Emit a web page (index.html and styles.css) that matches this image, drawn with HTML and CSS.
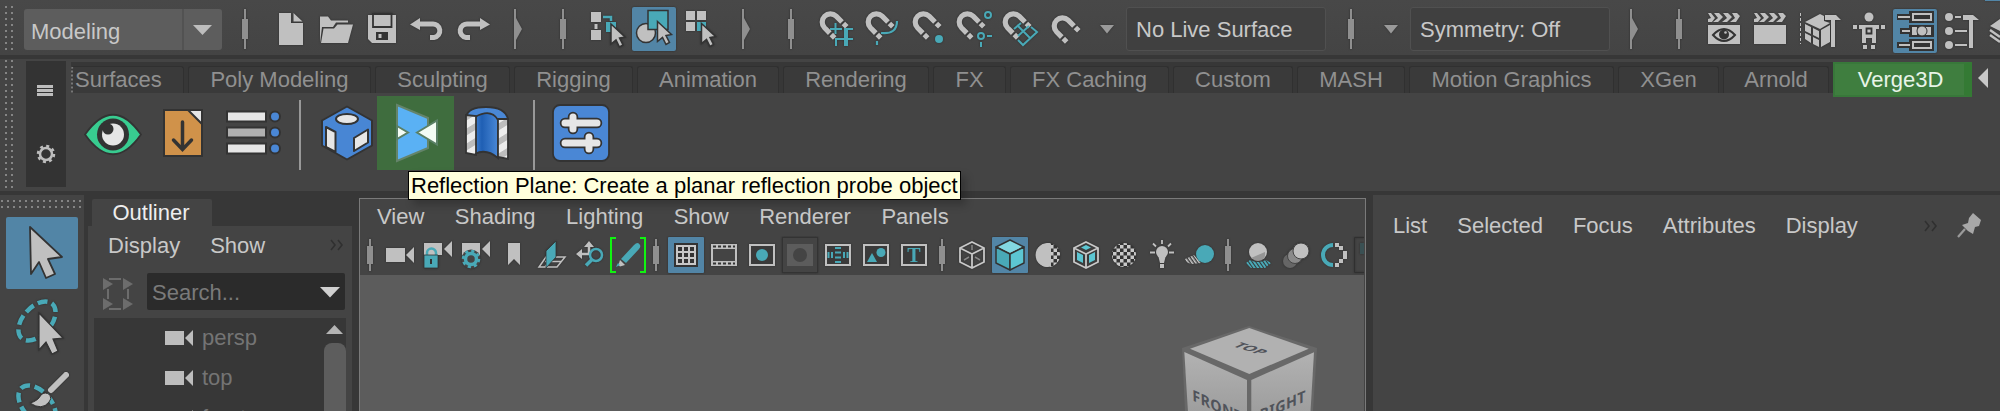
FILE: index.html
```html
<!DOCTYPE html>
<html lang="en">
<head>
<meta charset="utf-8">
<title>Modeling workspace</title>
<link rel="stylesheet" href="styles.css">
</head>
<body>
<svg width="0" height="0" class="defs">
  <defs>
    <g id="mag">
      <path d="M9.800 21.100 L4.500 15.800 A8.240 8.240 0 0 1 16.150 4.150 L22 10" fill="none" stroke="#c0c0c0" stroke-width="5.200"/>
      <path d="M11.300 22.600 l3.400 3.400 M23.400 11.400 l3.400 3.400" stroke="#c0c0c0" stroke-width="5"/>
    </g>
    <path id="pointer" d="M0 0 L14 13 L8.500 14 L12 21 L8.500 23 L5 16 L0 20 Z" fill="#c0c0c0" stroke="#333" stroke-width="1.500"/>
    <g id="cam"><rect x="0" y="0" width="19" height="14"/><path d="M28 -1 V15 L20 7 Z"/></g>
    <g id="sep" fill="#8f8f8f"><rect x="-1" y="-20" width="2" height="40"/><rect x="-3" y="-10" width="6" height="20"/></g>
    <g id="ssep" fill="#8f8f8f"><rect x="-1" y="-16" width="2" height="32"/><rect x="-3" y="-9" width="6" height="18"/></g>
    <g id="fold" fill="#8f8f8f"><rect x="0" y="-20" width="2" height="40"/><path d="M2 -11 L8 0 L2 11Z"/></g>
    <pattern id="check" width="7" height="7" patternUnits="userSpaceOnUse"><rect width="7" height="7" fill="#333"/><path d="M0 0h3.500v3.500h-3.500zM3.500 3.500h3.500v3.500h-3.500z" fill="#c8c8c8"/></pattern>
    <pattern id="stripe" width="3" height="3" patternUnits="userSpaceOnUse" patternTransform="rotate(-35)"><rect width="1.600" height="3" fill="#c8c8c8"/></pattern>
    <pattern id="tealstripe" width="3" height="3" patternUnits="userSpaceOnUse" patternTransform="rotate(-35)"><rect width="2" height="3" fill="#49a9b7"/></pattern>
    <linearGradient id="face" x1="0" y1="0" x2="0" y2="1"><stop offset="0" stop-color="#b2b2b2"/><stop offset="1" stop-color="#9b9b9b"/></linearGradient>
    <linearGradient id="tube" x1="0" y1="0" x2="1" y2="0"><stop offset="0" stop-color="#3f7fd0"/><stop offset=".3" stop-color="#1f5fb4"/><stop offset="1" stop-color="#4a88d6"/></linearGradient>
    <pattern id="wall" width="12" height="15" patternUnits="userSpaceOnUse" patternTransform="skewY(-32)"><rect width="12" height="15" fill="#ededed"/><rect width="12" height="7" fill="#bdbdbd"/></pattern>
  </defs>
</svg>

<div class="app">
  <header class="statusbar">
    <div class="grip grip-status"></div>
    <div class="mode"><span class="mode-name">Modeling</span><span class="mode-arrow"><svg width="38" height="41" viewBox="186 9 38 41"><path d="M195 25h19l-9.500 10z" fill="#bdbdbd"/></svg></span></div>
    <svg class="ico" width="46" height="55" viewBox="222 0 46 55"><use href="#sep" x="245" y="29"/></svg>
    <svg class="ico" width="46" height="55" viewBox="268 0 46 55"><path d="M279 13h12v10h12v22h-24z M293.500 13l9 8.500h-9z"/></svg>
    <svg class="ico" width="44" height="55" viewBox="314 0 44 55"><path d="M320 18V43L322 27H333L336 22.500H348V20.500H331L328 16.500H320Z"/><path d="M323.500 28.500H334L337.500 24.500H353L348 43H321Z"/></svg>
    <svg class="ico" width="47" height="55" viewBox="358 0 47 55"><path d="M368 15H396V43H372L368 39Z"/><path d="M373 14H391.500V27H373Z" fill="none" stroke="#333" stroke-width="1.800"/><path d="M376 32h12v8h-12z" fill="#333"/><path d="M378.500 34h3v4h-3z"/></svg>
    <svg class="ico" width="45" height="55" viewBox="405 0 45 55"><path d="M418 24H432A6.500 6.500 0 0 1 434 37.500H430" fill="none" stroke="#c0c0c0" stroke-width="5"/><path d="M420 18v12l-10-5.500z"/></svg>
    <svg class="ico" width="50" height="55" viewBox="450 0 50 55"><path d="M481 24H468A6.500 6.500 0 0 0 466 37.500H470" fill="none" stroke="#c0c0c0" stroke-width="5"/><path d="M480 18v12l10-5.500z"/></svg>
    <svg class="ico" width="40" height="55" viewBox="500 0 40 55"><use href="#fold" x="514" y="29"/></svg>
    <svg class="ico" width="44" height="55" viewBox="540 0 44 55"><use href="#sep" x="563" y="29"/></svg>
    <svg class="ico" width="48" height="55" viewBox="584 0 48 55"><path d="M591 12h10v10h-10z M591 30h10v10h-10z M594.500 24h3v5h-3z"/><path d="M603 17h8v4" fill="none" stroke="#49a9b7" stroke-width="2.500"/><path d="M606 22h10v10h-10z" fill="#49a9b7"/><use href="#pointer" x="611" y="24"/></svg>
    <svg class="ico" width="44" height="55" viewBox="632 0 44 55"><rect x="632" y="7" width="44" height="44" rx="2" fill="#5285a6"/><circle cx="646" cy="33" r="9.500" stroke="#333" stroke-width="1.500"/><path d="M648 10.500h20v19h-20z" fill="#49a9b7" stroke="#333" stroke-width="1.500"/><use href="#pointer" x="657.500" y="21.500"/></svg>
    <svg class="ico" width="50" height="55" viewBox="676 0 50 55"><path d="M686 11h9v9h-9z M697 11h9v9h-9z M686 22h9v9h-9z"/><path d="M697 22h9v9h-9z" fill="#49a9b7"/><use href="#pointer" x="701.500" y="23.500"/></svg>
    <svg class="ico" width="42" height="55" viewBox="726 0 42 55"><use href="#fold" x="742" y="29"/></svg>
    <svg class="ico" width="46" height="55" viewBox="768 0 46 55"><use href="#sep" x="791" y="29"/></svg>
    <svg class="ico" width="46" height="55" viewBox="814 0 46 55"><use href="#mag" x="820" y="12"/><path d="M835.500 23v11M830 29h12M853 29h-8v17M841 34M836 46v-7h4M847 29v17M840 39h13" fill="none" stroke="#49a9b7" stroke-width="2"/></svg>
    <svg class="ico" width="46" height="55" viewBox="860 0 46 55"><use href="#mag" x="866" y="12"/><path d="M881 33C892 34 897 30 897 21M877 41v4" fill="none" stroke="#49a9b7" stroke-width="2.200"/></svg>
    <svg class="ico" width="46" height="55" viewBox="906 0 46 55"><use href="#mag" x="913" y="12"/><circle cx="939" cy="39" r="4" fill="#49a9b7"/></svg>
    <svg class="ico" width="46" height="55" viewBox="952 0 46 55"><use href="#mag" x="957" y="12"/><g fill="none" stroke="#49a9b7" stroke-width="2"><circle cx="988" cy="15" r="3"/><circle cx="981" cy="36" r="3"/><path d="M987 36h5M981 42v5"/></g></svg>
    <svg class="ico" width="44" height="55" viewBox="998 0 44 55"><use href="#mag" x="1003" y="12"/><path d="M1014 29l7 -6M1017 25l13 13M1018 36l11 -10M1031 27l6 5-14 13-5-5" fill="none" stroke="#49a9b7" stroke-width="2"/></svg>
    <svg class="ico" width="44" height="55" viewBox="1042 0 44 55"><use href="#mag" x="1052" y="16"/></svg>
    <svg class="ico" width="40" height="55" viewBox="1086 0 40 55"><path d="M1100 25h14l-7 8.500z" fill="#9a9a9a"/></svg>
    <div class="field field-live">No Live Surface</div>
    <svg class="ico" width="44" height="55" viewBox="1326 0 44 55"><use href="#sep" x="1351" y="29"/></svg>
    <svg class="ico" width="40" height="55" viewBox="1370 0 40 55"><path d="M1384 25h14l-7 8.500z" fill="#9a9a9a"/></svg>
    <div class="field field-sym">Symmetry: Off</div>
    <svg class="ico" width="46" height="55" viewBox="1610 0 46 55"><use href="#fold" x="1630" y="29"/></svg>
    <svg class="ico" width="45" height="55" viewBox="1656 0 45 55"><use href="#sep" x="1679" y="29"/></svg>
    <svg class="ico" width="46" height="55" viewBox="1701 0 46 55"><path d="M1708 13h3l4 5 -3 4h-4v-3l3-1zM1714 13h5l4 4-5 5h-5l5-4zM1723 13h5l4 4-5 5h-5l5-4zM1732 13h5l3 3-4 6h-6l5-4zM1708 25h32v19h-32z"/><path d="M1713 35q11-12 22 0q-11 12-22 0z" fill="#c0c0c0" stroke="#333" stroke-width="2"/><circle cx="1724" cy="34.500" r="5" fill="#333"/><circle cx="1725.500" cy="32.500" r="1.300"/></svg>
    <svg class="ico" width="46" height="55" viewBox="1747 0 46 55"><path d="M1754 13h3l4 5 -3 4h-4v-3l3-1zM1760 13h5l4 4-5 5h-5l5-4zM1769 13h5l4 4-5 5h-5l5-4zM1778 13h5l3 3-4 6h-6l5-4zM1754 25h32v19h-32z"/></svg>
    <svg class="ico" width="53" height="55" viewBox="1793 0 53 55"><path d="M1800.500 13v31" stroke="#c0c0c0" stroke-dasharray="3 2"/><path d="M1805 22l15-8 4 2v5l6 2-10 6z M1805 24l6 3v7l-6-3zM1813 28l6 3v7l-6-3zM1805 33l6 3v7l-6-4zM1813 37l6 3v7l-6-3zM1821 30l9-5v17l-9 5z"/><path d="M1825 15h11l5 5h-6v27h-4V20h-6z"/></svg>
    <svg class="ico" width="47" height="55" viewBox="1846 0 47 55"><circle cx="1869" cy="17" r="4.500"/><path d="M1853 25h4v4h-4zM1859 25h20v4h-3v14h-4v-5h-6v5h-4V29h-3zM1881 25h4v4h-4zM1863 45h4v4h-4zM1871 45h4v4h-4z"/><path d="M1866.500 28.500h5v5h-5z" fill="#c0c0c0" stroke="#333" stroke-width="1.800"/></svg>
    <svg class="ico" width="44" height="55" viewBox="1893 0 44 55"><rect x="1893" y="9" width="44" height="44" rx="2" fill="#5285a6"/><path d="M1897 14h12v-3h25v12h-25v-3h-12zM1900 28h9v-3h25v12h-25v-3h-9zM1897 42h12v-3h25v12h-25v-3h-12z" fill="#333"/><path d="M1898 16h12v2h-12zM1902 30h8v2h-8zM1899 44h11v2h-11z"/><path d="M1913 14h18v6h-18zM1913 42h18v6h-18z" fill="none" stroke="#c0c0c0" stroke-width="2"/><path d="M1917 27h-5v8h5zM1926 27h5v8h-5z"/><circle cx="1922" cy="31" r="5" stroke="#333" stroke-width="1"/></svg>
    <svg class="ico" width="47" height="55" viewBox="1937 0 47 55"><circle cx="1949" cy="17" r="4"/><circle cx="1949" cy="31" r="4"/><circle cx="1949" cy="45" r="4"/><path d="M1955 16h6v2h-6zM1955 30h12v2h-12zM1955 44h12v2h-12zM1963 15h10l6 5h-6v28h-4V20h-6z"/></svg>
    <svg class="ico" width="16" height="55" viewBox="1984 0 16 55"><path d="M1985 0h15v1h-15z" fill="#5285a6"/><path d="M1990 26l10-7v12z"/><path d="M1990 30l10 7M1990 35l10 7" stroke="#c0c0c0" stroke-width="2.500"/></svg>
  </header>

  <section class="shelf">
    <div class="grip grip-shelf"></div>
    <div class="shelf-side">
      <svg width="40" height="126" viewBox="26 61 40 126"><path d="M37 86.500h16M37 90.500h16M37 94.500h16" stroke="#bdbdbd" stroke-width="3"/><circle cx="46" cy="154" r="6" fill="none" stroke="#bdbdbd" stroke-width="2.500"/><circle cx="46" cy="154" r="8" fill="none" stroke="#bdbdbd" stroke-width="2.500" stroke-dasharray="3 3.280"/></svg>
    </div>
    <div class="shelf-main">
      <nav class="tabs">
        <span class="tab tab-first">Surfaces</span><span class="tab">Poly Modeling</span><span class="tab">Sculpting</span><span class="tab">Rigging</span><span class="tab">Animation</span><span class="tab">Rendering</span><span class="tab">FX</span><span class="tab">FX Caching</span><span class="tab">Custom</span><span class="tab">MASH</span><span class="tab">Motion Graphics</span><span class="tab">XGen</span><span class="tab">Arnold</span><span class="tab-active">Verge3D</span>
        <svg class="tab-scroll" width="28" height="35" viewBox="1972 62 28 35"><path d="M1988 68v20l-10-10z" fill="#c8c8c8"/></svg>
      </nav>
      <div class="shelf-icons">
        <svg width="76" height="74" viewBox="71 96 76 74"><path d="M85 134.500Q113 95 141 134.500Q113 174 85 134.500Z" fill="#38cc90" stroke="#333" stroke-width="1.800"/><circle cx="113" cy="134.500" r="16" fill="#333"/><circle cx="113" cy="134.500" r="11" fill="#e6e6e6"/><circle cx="108" cy="129" r="5.500" fill="#333"/></svg>
        <svg width="70" height="74" viewBox="147 96 70 74"><path d="M164 110h38v46h-38z" fill="#d0924a" stroke="#333" stroke-width="2"/><path d="M188 110h14v14z" fill="#e6e6e6" stroke="#333" stroke-width="2"/><path d="M182.500 122v27M173.500 140l9 9.500 9-9.500" fill="none" stroke="#333" stroke-width="3.500" stroke-linecap="round"/></svg>
        <svg width="73" height="74" viewBox="217 96 73 74"><g stroke="#333" stroke-width="2"><path d="M227 111.500h39v10h-39zM227 143.500h39v10h-39z" fill="#e6e6e6"/><path d="M227 127.500h39v10h-39z" fill="#b0b0b0"/><g fill="#4a87d5"><circle cx="275" cy="116.500" r="5"/><circle cx="275" cy="132.500" r="5"/><circle cx="275" cy="148.500" r="5"/></g></g></svg>
        <svg width="87" height="74" viewBox="290 96 87 74"><path d="M299 100h2v70h-2z" fill="#999"/><g stroke="#333" stroke-width="2" stroke-linejoin="round"><path d="M347 106.500l25 14v25l-25 14-25-14v-25z" fill="#4886d4"/><ellipse cx="347" cy="119" rx="11" ry="5" fill="#e6e6e6"/><path d="M326 127l9.500 5v20l-9.500-5zM354 138l14-8.500v13l-14 8.500z" fill="#e6e6e6"/></g></svg>
        <svg width="77" height="74" viewBox="377 96 77 74"><path d="M377 96h77v74h-77z" fill="#3f6d3e"/><path d="M397 105l31 13v30l-31 13z" fill="#5ab1f4" stroke="#64846a" stroke-width="2"/><path d="M397 126l11 6.500-11 6.500zM417 132.500l20-12v24z" fill="#f3fcf4" stroke="#5a8066" stroke-width="2"/></svg>
        <svg width="66" height="74" viewBox="454 96 66 74"><g stroke="#333" stroke-width="1.800"><path d="M475 117Q475 153 475 154Q486 148 498 158V117Q484 108 475 117Z" fill="url(#tube)"/><path d="M466 117Q468 107 486 107Q505 107 508 119L498 120Q491 108 475 117Z" fill="#4a88d6"/><path d="M466 115l10 1v39l-10-2zM498 119h10v40l-10-2z" fill="url(#wall)"/></g></svg>
        <svg width="100" height="74" viewBox="520 96 100 74"><path d="M533 100h2v70h-2z" fill="#999"/><rect x="553" y="105" width="56" height="56" rx="7" fill="#4a87d5" stroke="#333" stroke-width="1.800"/><g stroke-linecap="round" fill="none"><path d="M565 123h32M573 117v12M565 143h32M589 137v12" stroke="#333" stroke-width="10.500"/><path d="M565 123h32M573 117v12M565 143h32M589 137v12" stroke="#e6e6e6" stroke-width="7"/></g></svg>
      </div>
    </div>
    <div class="tooltip">Reflection Plane: Create a planar reflection probe object</div>
  </section>

  <main class="workspace">
    <aside class="toolbox">
      <div class="grip grip-tools"></div>
      <div class="tool-active"><svg width="72" height="72" viewBox="6 217 72 72"><path d="M30 227L62 257 48 259 55 274 46 278 39 262 31 274Z" fill="#c0c0c0" stroke="#333" stroke-width="1.800" stroke-linejoin="round"/></svg></div>
      <svg class="ico" width="84" height="72" viewBox="0 290 84 72"><ellipse cx="37" cy="321" rx="14" ry="23" transform="rotate(42 37 321)" fill="none" stroke="#49a9b7" stroke-width="4.500" stroke-dasharray="10 4.500"/><path d="M39 313L63 338 53 339 58 351 52 354 46 342 39 350Z" stroke="#333" stroke-width="1.200"/></svg>
      <svg class="ico" width="84" height="49" viewBox="0 362 84 49"><ellipse cx="37" cy="405" rx="14" ry="23" transform="rotate(-42 37 405)" fill="none" stroke="#49a9b7" stroke-width="4.500" stroke-dasharray="10 4.500"/><path d="M66 375l-15 15" stroke="#c0c0c0" stroke-width="6" stroke-linecap="round"/><path d="M30 403q8-2 11-8q4-4 9 0q2 4-1 7q-7 9-19 1z" stroke="#333" stroke-width="1"/></svg>
    </aside>

    <section class="outliner">
      <div class="outliner-tabs"><span class="outliner-tab">Outliner</span></div>
      <div class="outliner-body">
        <div class="outliner-menu"><span>Display</span><span>Show</span><svg class="more" width="14" height="12" viewBox="0 0 14 12"><path d="M1 1l4 5-4 5M8 1l4 5-4 5" fill="none" stroke="#303030" stroke-width="1.600"/></svg></div>
        <div class="search-row">
          <svg width="35" height="37" viewBox="100 273 35 37"><path d="M103 278l10 6-10 6zM123 278l10 6-10 6zM103 298l10 6-10 6zM123 298l10 6-10 6z" fill="#6c6c6c"/><path d="M109 279h12M128 289v10M108 289v10M109 309h12" stroke="#6c6c6c" stroke-width="2"/></svg>
          <div class="search"><span>Search...</span><svg width="20" height="11" viewBox="0 0 20 11"><path d="M0 0h20l-10 10.500z" fill="#d0d0d0"/></svg></div>
        </div>
        <div class="list">
          <div class="rows">
            <div class="row"><svg width="28" height="16" viewBox="0 -1 28 16" fill="#bdbdbd"><use href="#cam"/></svg><span>persp</span></div>
            <div class="row"><svg width="28" height="16" viewBox="0 -1 28 16" fill="#bdbdbd"><use href="#cam"/></svg><span>top</span></div>
            <div class="row"><svg width="28" height="16" viewBox="0 -1 28 16" fill="#bdbdbd"><use href="#cam"/></svg><span>front</span></div>
          </div>
          <div class="scroll"><svg width="22" height="25" viewBox="324 318 22 25"><path d="M326 334h17l-8.500-9z" fill="#b4b4b4"/></svg><div class="thumb"></div></div>
        </div>
      </div>
    </section>

    <section class="viewport">
      <nav class="view-menu"><span>View</span><span>Shading</span><span>Lighting</span><span>Show</span><span>Renderer</span><span>Panels</span></nav>
      <div class="view-tools">
        <svg class="ico" width="21" height="38" viewBox="360 236 21 38"><use href="#ssep" x="370" y="255"/></svg>
        <svg class="ico" width="38" height="38" viewBox="381 236 38 38"><use href="#cam" x="386" y="248"/></svg>
        <svg class="ico" width="38" height="38" viewBox="419 236 38 38"><path d="M424 243h18v12h-18zM452 241v16l-8-8z"/><path d="M427 255v-2a4.500 4.500 0 0 1 9 0v2" fill="none" stroke="#49a9b7" stroke-width="2.500"/><path d="M424 255h14v13h-14z" fill="#49a9b7" stroke="#333" stroke-width=".8"/><path d="M430 259h2v5h-2z" fill="#333"/></svg>
        <svg class="ico" width="38" height="38" viewBox="457 236 38 38"><path d="M462 243h18v12h-18zM490 241v16l-8-8z"/><circle cx="471" cy="259" r="9.500" fill="#444"/><circle cx="471" cy="259" r="5.500" fill="none" stroke="#49a9b7" stroke-width="3.500"/><circle cx="471" cy="259" r="8" fill="none" stroke="#49a9b7" stroke-width="2.500" stroke-dasharray="3.200 3.080"/></svg>
        <svg class="ico" width="38" height="38" viewBox="495 236 38 38"><path d="M508 243h12v22l-6-6-6 6z"/></svg>
        <svg class="ico" width="38" height="38" viewBox="533 236 38 38"><path d="M546 257h19l-8 10h-18zM545 261.500h16M552 257l-7 10" fill="none" stroke="#c0c0c0" stroke-width="1.500"/><path d="M546 251l10-10v16l-10 11z" fill="#49a9b7" stroke="#333" stroke-width=".8"/></svg>
        <svg class="ico" width="38" height="38" viewBox="571 236 38 38"><path d="M589 254v-8M589 254h-7" stroke="#c0c0c0" stroke-width="2.500"/><path d="M584 247l5-6 5 6zM582 249v10l-6-5z"/><circle cx="596" cy="255" r="6" fill="none" stroke="#49a9b7" stroke-width="2.500"/><path d="M592 259.500l-6 6" stroke="#49a9b7" stroke-width="3.500"/></svg>
        <svg width="38" height="38" viewBox="609 236 38 38"><path d="M616 238h-5v34h5M640 238h5v34h-5" fill="none" stroke="#10f410" stroke-width="2"/><path d="M621 259l13-14q4-4 6 0q1 2-1 4l-13 14z" fill="#49a9b7"/><path d="M620 260l5 5-5 1.500-1.500-1.500z" fill="#c0c0c0"/><path d="M616 267l2-4 2 2z" fill="#49a9b7"/></svg>
        <svg class="ico" width="20" height="38" viewBox="647 236 20 38"><use href="#ssep" x="656" y="255"/></svg>
        <svg class="ico" width="38" height="38" viewBox="667 236 38 38"><rect x="668" y="237" width="36" height="36" rx="1" fill="#5285a6"/><path d="M674 243h24v24h-24z" fill="#333"/><path d="M677 246h18v18h-18zM683 246v18M689 246v18M677 252h18M677 258h18" fill="none" stroke="#c8c8c8" stroke-width="2"/></svg>
        <svg class="ico" width="38" height="38" viewBox="705 236 38 38"><path d="M711 244h26v22h-26z"/><path d="M713 249h22v12h-22z" fill="#444"/><path d="M713 246.500h22M713 263.500h22" stroke="#333" stroke-width="2" stroke-dasharray="3 2"/></svg>
        <svg class="ico" width="38" height="38" viewBox="743 236 38 38"><path d="M750 245h24v20h-24z" fill="#3a3a3a" stroke="#c0c0c0" stroke-width="2"/><circle cx="762" cy="255" r="6" fill="#49a9b7"/></svg>
        <svg class="ico" width="38" height="38" viewBox="781 236 38 38"><path d="M782.500 237.500h35v35h-35z" fill="#444" stroke="#333"/><path d="M787 244h26v22h-26z" fill="#5c5c5c"/><circle cx="800" cy="255" r="7" fill="#444"/></svg>
        <svg class="ico" width="38" height="38" viewBox="819 236 38 38"><path d="M826 245h24v20h-24z" fill="#3a3a3a" stroke="#c0c0c0" stroke-width="2"/><path d="M835 248h6M835 252.500h6M835 257.500h6M835 262h6M828.500 252v6M832 252v6M844 252v6M847.500 252v6" stroke="#49a9b7" stroke-width="2"/></svg>
        <svg class="ico" width="38" height="38" viewBox="857 236 38 38"><path d="M864 245h24v20h-24z" fill="#3a3a3a" stroke="#c0c0c0" stroke-width="2"/><path d="M867 262l5-9 5 9z" fill="#49a9b7"/><circle cx="881" cy="252.500" r="4.500" fill="#49a9b7"/></svg>
        <svg class="ico" width="38" height="38" viewBox="895 236 38 38"><path d="M902 245h24v20h-24z" fill="#3a3a3a" stroke="#c0c0c0" stroke-width="2"/><text class="glyph-t" x="914" y="262" text-anchor="middle">T</text></svg>
        <svg class="ico" width="20" height="38" viewBox="933 236 20 38"><use href="#ssep" x="942" y="255"/></svg>
        <svg class="ico" width="38" height="38" viewBox="953 236 38 38"><path d="M972 242l12 6v14l-12 6-12-6v-14zM960 248l12 6 12-6M972 254v14" fill="none" stroke="#c8c8c8" stroke-width="1.800"/><path d="M972 245v5M964 260l5-3M980 260l-5-3" stroke="#888" stroke-width="1.500"/></svg>
        <svg class="ico" width="38" height="38" viewBox="991 236 38 38"><rect x="992" y="237" width="36" height="36" rx="1" fill="#5285a6"/><g stroke="#333" stroke-width="1.500" stroke-linejoin="round"><path d="M1010 240l14 7-14 7-14-7z" fill="#83d8e2"/><path d="M996 247l14 7v16l-14-7z" fill="#49a9b7"/><path d="M1024 247l-14 7v16l14-7z" fill="#5cc6d2"/></g></svg>
        <svg class="ico" width="38" height="38" viewBox="1029 236 38 38"><circle cx="1048" cy="255" r="12" fill="url(#check)"/><path d="M1051 243.500a12 12 0 1 0 0 23z"/></svg>
        <svg class="ico" width="38" height="38" viewBox="1067 236 38 38"><path d="M1086 242l12 6v14l-12 6-12-6v-14zM1074 248l12 6 12-6M1086 254v14" fill="none" stroke="#c8c8c8" stroke-width="1.800"/><path d="M1086 245l5 2.500-5 2.500-5-2.500zM1077 252l6 3v8l-6-3zM1095 252l-6 3v8l6-3z" fill="#5cc6d2"/></svg>
        <svg class="ico" width="38" height="38" viewBox="1105 236 38 38"><circle cx="1124" cy="255" r="12" fill="url(#check)"/></svg>
        <svg class="ico" width="38" height="38" viewBox="1143 236 38 38"><circle cx="1162" cy="252" r="6"/><path d="M1158 255h8l-2 8h-4zM1160 264h4v4h-4z"/><path d="M1162 240v4M1150 252.500h5M1169 252.500h5M1153 243.500l3 3M1171 243.500l-3 3" stroke="#c0c0c0" stroke-width="1.800"/></svg>
        <svg class="ico" width="38" height="38" viewBox="1181 236 38 38"><path d="M1185 259l9-4 7 8-9 1q-7-1-7-5z" fill="url(#stripe)"/><circle cx="1205" cy="254" r="9" fill="#49a9b7"/></svg>
        <svg class="ico" width="20" height="38" viewBox="1219 236 20 38"><use href="#ssep" x="1228" y="255"/></svg>
        <svg class="ico" width="38" height="38" viewBox="1239 236 38 38"><circle cx="1258" cy="252" r="9"/><path d="M1251 258l14-6q1 9-7 9-4 0-7-3z" fill="#444" opacity=".35"/><path d="M1246 263l4-3q8 4 16 0l5 3-6 5h-14z" fill="url(#tealstripe)"/></svg>
        <svg class="ico" width="38" height="38" viewBox="1277 236 38 38"><circle cx="1290" cy="261" r="7" fill="#666"/><circle cx="1295" cy="256" r="7.500" fill="#8a8a8a" stroke="#444"/><circle cx="1301" cy="251" r="8" fill="#c0c0c0" stroke="#444"/></svg>
        <svg class="ico" width="38" height="38" viewBox="1315 236 38 38"><path d="M1333 245a10 10 0 0 0 0 20" fill="none" stroke="#49a9b7" stroke-width="4"/><path d="M1335 243h4v4h-4zM1339 246h4v4h-4zM1343 251h4v8h-4zM1339 259h4v4h-4zM1335 263h4v4h-4z"/></svg>
        <svg class="ico" width="11" height="38" viewBox="1353 236 11 38"><path d="M1364 237.500h-9.500v35h9.500" fill="none" stroke="#303030"/><path d="M1360 243h4v11h-4z" fill="#3a5053"/></svg>
      </div>
      <svg class="scene" width="1004" height="136" viewBox="360 275 1004 136">
        <path d="M1182 348L1249 326 1317 348 1313 411H1185Z" fill="#686868"/>
        <path d="M1190 348.700L1249.300 328 1308.700 348.700 1249.300 374Z" fill="#b1b1b1"/>
        <path d="M1184.300 352L1247 380V420H1188.500Z" fill="url(#face)"/>
        <path d="M1314 352.300L1251.300 380V420H1310Z" fill="url(#face)"/>
        <text class="cube-label" text-anchor="middle" transform="matrix(.95 .3 -.85 .36 1246 350.500)">TOP</text>
        <text class="cube-label cube-side" transform="matrix(.84 .38 .03 .92 1192.500 400.500)">FRONT</text>
        <text class="cube-label cube-side" text-anchor="end" transform="matrix(.84 -.36 0 .92 1306 401)">RIGHT</text>
      </svg>
    </section>

    <section class="attributes">
      <span>List</span><span>Selected</span><span>Focus</span><span>Attributes</span><span>Display</span>
      <svg class="attr-more" width="14" height="12" viewBox="0 0 14 12"><path d="M1 1l4 5-4 5M8 1l4 5-4 5" fill="none" stroke="#303030" stroke-width="1.600"/></svg>
      <svg class="pin" width="26" height="28" viewBox="1956 212 26 28"><path d="M1973 213l8 7-2 6-4 1-2 7-5-3-6-6 6-2 1-5z" fill="#a8a8a8"/><path d="M1965 229l-7 8" stroke="#9a9a9a" stroke-width="2.200"/></svg>
    </section>
  </main>
</div>
</body>
</html>
```
FILE: styles.css
```css
* { box-sizing: border-box; }
body {
  margin: 0;
  width: 2000px;
  height: 411px;
  overflow: hidden;
  background: #373737;
  color: #c8c8c8;
  font: 22px/26px "Liberation Sans", Arial, sans-serif;
  white-space: nowrap;
}
svg { display: block; flex: none; }
.defs { position: absolute; }
.ico { fill: #c0c0c0; filter: drop-shadow(0 0 1px #2c2c2c); }
.app { display: flex; flex-direction: column; height: 411px; }

.grip {
  flex: none;
  background-image: conic-gradient(at 2px 2px, transparent 75%, #858585 0);
  background-size: 6px 6px;
}

/* Status line */
.statusbar { display: flex; flex: none; height: 55px; background: linear-gradient(#484848, #444); overflow: hidden; }
.grip-status { width: 8px; height: 44px; margin: 6px 11px 0 5px; }
.mode { display: flex; width: 198px; height: 41px; margin-top: 9px; border-radius: 3px; background: #5d5d5d; flex: none; overflow: hidden; }
.mode-name { width: 160px; padding: 10px 0 0 7px; border-right: 2px solid #525252; }
.field {
  flex: none;
  height: 44px;
  margin-top: 7px;
  padding: 9px 0 0 9px;
  background: #404040;
  border: 1px solid #505050;
  border-radius: 3px;
}
.field-live { width: 200px; }
.field-sym { width: 200px; }

/* Shelf */
.shelf { position: relative; display: flex; flex: none; height: 132px; margin-top: 4px; background: #444; }
.grip-shelf { width: 8px; height: 128px; margin: 1px 13px 0 5px; }
.shelf-side { flex: none; width: 40px; height: 126px; margin: 2px 5px 0 0; background: #333; }
.shelf-main { flex: 1; padding-top: 3px; }
.tabs {
  display: grid;
  grid-template-columns: 117px 187px 139px 123px 146px 150px 77px 163px 124px 112px 209px 105px 110px 139px 28px;
  height: 34px;
  background: linear-gradient(#373737 31px, transparent 31px);
}
.tab {
  height: 27px;
  margin: 4px 4px 0 0;
  background: #3a3a3a;
  border: 1px solid #303030;
  border-bottom: 0;
  border-radius: 3px 3px 0 0;
  color: #909090;
  text-align: center;
  line-height: 25px;
}
.tab-first { text-align: left; padding-left: 2px; border-left: 2px dotted #777; }
.tab-active { height: 35px; background: #3f7e3f; border: 2px solid #38783a; border-right: 8px solid #347a34; color: #e8f4e8; text-align: center; line-height: 32px; padding-left: 2px; }
.tab-scroll { background: #444; }
.shelf-icons { display: flex; }
.tooltip {
  position: absolute;
  left: 408px;
  top: 112px;
  width: 553px;
  height: 29px;
  z-index: 2;
  padding-left: 2px;
  border: 1px solid #000;
  background: #ffffdc;
  color: #000;
  line-height: 27px;
  box-shadow: 5px 5px 8px rgba(0, 0, 0, .22);
}

/* Workspace */
.workspace { display: flex; flex: 1; min-height: 0; margin-top: 4px; }
.toolbox { flex: none; width: 84px; background: #444; overflow: hidden; }
.grip-tools { width: 80px; height: 8px; margin: 5px 0 9px 1px; }
.tool-active { width: 72px; height: 72px; margin: 0 0 1px 6px; border-radius: 2px; background: #5285a6; }

.outliner { flex: none; width: 264px; margin: 0 4px; display: flex; flex-direction: column; }
.outliner-tabs { height: 31px; padding: 4px 0 0 4px; }
.outliner-tab { display: block; width: 120px; height: 27px; padding-right: 2px; background: #444; color: #eee; text-align: center; line-height: 28px; border-radius: 2px 2px 0 0; }
.outliner-body { flex: 1; display: flex; flex-direction: column; background: #444; min-height: 0; overflow: hidden; }
.outliner-menu { display: flex; gap: 30px; height: 47px; padding: 7px 8px 0 20px; }
.more { margin: 6px 0 0 auto; }
.search-row { display: flex; flex: none; gap: 12px; padding-left: 12px; }
.search { display: flex; align-items: center; justify-content: space-between; width: 198px; height: 37px; padding: 2px 5px 0; background: #2b2b2b; border-radius: 2px; color: #7a7a7a; }
.list { display: flex; width: 252px; height: 93px; margin: 8px 0 0 6px; background: #373737; overflow: hidden; }
.rows { flex: 1; color: #747474; }
.row { display: flex; align-items: center; gap: 9px; height: 40px; padding-left: 71px; }
.scroll { width: 22px; }
.thumb { height: 90px; background: #5d5d5d; border-radius: 8px; }

.viewport { flex: none; width: 1007px; height: 220px; margin: 3px 7px 0 3px; border: 1px solid #7a7a7a; background: #444; overflow: hidden; }
.view-menu { display: flex; gap: 30.5px; height: 37px; padding: 5px 0 0 17px; }
.view-tools { display: flex; height: 39px; width: 1004px; overflow: hidden; }
.scene { background: #5c5c5c; }
.glyph-t { font: bold 20px "Liberation Serif", serif; fill: #49a9b7; }
.cube-label { font: bold 15px "Noto Sans", sans-serif; fill: #50535a; }
.cube-side { font-size: 17px; letter-spacing: .5px; }

.attributes { display: flex; flex: 1; gap: 30px; padding: 18px 0 0 20px; background: #444; }
.attr-more { margin: 7px 0 0 auto; }
.pin { margin: -1px 18px 0 -12px; }
```
